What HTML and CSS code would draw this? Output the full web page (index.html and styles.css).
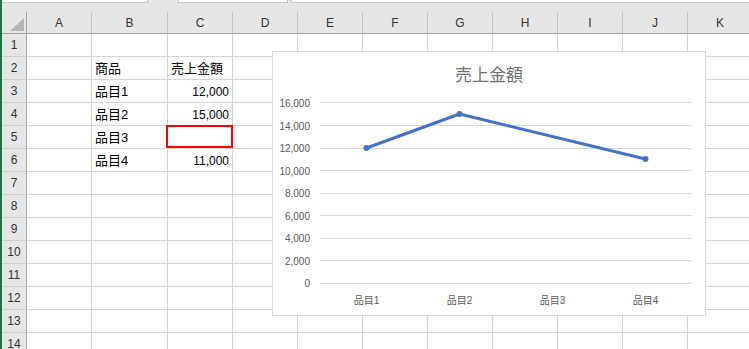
FILE: index.html
```html
<!DOCTYPE html>
<html lang="ja">

<head>
    <meta charset="UTF-8">
    <meta name="viewport" content="width=device-width, initial-scale=1.0">
    <title>売上金額</title>
    <link rel="stylesheet" href="styles.css">
</head>

<body>
    <div class="window">
        <div class="formula-bar">
            <div class="name-box"></div>
            <div class="fx-gap"></div>
            <div class="mid-box"></div>
            <div class="formula-box"></div>
        </div>

        <div class="sheet">
            <table class="grid">
                <colgroup>
                    <col class="col-rh">
                    <col class="col-w">
                    <col class="col-b">
                    <col class="col-w">
                    <col class="col-w">
                    <col class="col-w">
                    <col class="col-w">
                    <col class="col-w">
                    <col class="col-w">
                    <col class="col-w">
                    <col class="col-w">
                    <col class="col-w">
                </colgroup>
                <tr class="col-head">
                    <th class="corner"></th>
                    <th>A</th><th>B</th><th>C</th><th>D</th><th>E</th><th>F</th>
                    <th>G</th><th>H</th><th>I</th><th>J</th><th>K</th>
                </tr>
                <tr><th>1</th><td></td><td></td><td></td><td></td><td></td><td></td><td></td><td></td><td></td><td></td><td></td></tr>
                <tr><th>2</th><td></td><td>商品</td><td>売上金額</td><td></td><td></td><td></td><td></td><td></td><td></td><td></td><td></td></tr>
                <tr><th>3</th><td></td><td>品目1</td><td class="num">12,000</td><td></td><td></td><td></td><td></td><td></td><td></td><td></td><td></td></tr>
                <tr><th>4</th><td></td><td>品目2</td><td class="num">15,000</td><td></td><td></td><td></td><td></td><td></td><td></td><td></td><td></td></tr>
                <tr><th>5</th><td></td><td>品目3</td><td class="num sel"></td><td></td><td></td><td></td><td></td><td></td><td></td><td></td><td></td></tr>
                <tr><th>6</th><td></td><td>品目4</td><td class="num">11,000</td><td></td><td></td><td></td><td></td><td></td><td></td><td></td><td></td></tr>
                <tr><th>7</th><td></td><td></td><td></td><td></td><td></td><td></td><td></td><td></td><td></td><td></td><td></td></tr>
                <tr><th>8</th><td></td><td></td><td></td><td></td><td></td><td></td><td></td><td></td><td></td><td></td><td></td></tr>
                <tr><th>9</th><td></td><td></td><td></td><td></td><td></td><td></td><td></td><td></td><td></td><td></td><td></td></tr>
                <tr><th>10</th><td></td><td></td><td></td><td></td><td></td><td></td><td></td><td></td><td></td><td></td><td></td></tr>
                <tr><th>11</th><td></td><td></td><td></td><td></td><td></td><td></td><td></td><td></td><td></td><td></td><td></td></tr>
                <tr><th>12</th><td></td><td></td><td></td><td></td><td></td><td></td><td></td><td></td><td></td><td></td><td></td></tr>
                <tr><th>13</th><td></td><td></td><td></td><td></td><td></td><td></td><td></td><td></td><td></td><td></td><td></td></tr>
                <tr><th>14</th><td></td><td></td><td></td><td></td><td></td><td></td><td></td><td></td><td></td><td></td><td></td></tr>
            </table>

            <!-- chart floats over the cells D2:J13 -->
            <div class="chart">
                <svg width="432" height="263" viewBox="0 0 432 263">
                    <text class="chart-title" x="216" y="21">売上金額</text>

                    <g class="gridlines">
                        <line x1="47" y1="50.5" x2="419" y2="50.5"></line>
                        <line x1="47" y1="73.5" x2="419" y2="73.5"></line>
                        <line x1="47" y1="96.5" x2="419" y2="96.5"></line>
                        <line x1="47" y1="118.5" x2="419" y2="118.5"></line>
                        <line x1="47" y1="141.5" x2="419" y2="141.5"></line>
                        <line x1="47" y1="163.5" x2="419" y2="163.5"></line>
                        <line x1="47" y1="186.5" x2="419" y2="186.5"></line>
                        <line x1="47" y1="208.5" x2="419" y2="208.5"></line>
                        <line x1="47" y1="231.5" x2="419" y2="231.5"></line>
                    </g>

                    <g class="y-labels">
                        <text x="37" y="51">16,000</text>
                        <text x="37" y="74">14,000</text>
                        <text x="37" y="96">12,000</text>
                        <text x="37" y="119">10,000</text>
                        <text x="37" y="141">8,000</text>
                        <text x="37" y="164">6,000</text>
                        <text x="37" y="186">4,000</text>
                        <text x="37" y="209">2,000</text>
                        <text x="37" y="231">0</text>
                    </g>

                    <g class="x-labels">
                        <text x="93.5" y="248">品目1</text>
                        <text x="186.5" y="248">品目2</text>
                        <text x="279.5" y="248">品目3</text>
                        <text x="372.5" y="248">品目4</text>
                    </g>

                    <polyline class="series" points="93.5,96 186.5,62 372.5,107"></polyline>
                    <g class="markers">
                        <circle cx="93.5" cy="96" r="3"></circle>
                        <circle cx="186.5" cy="62" r="3"></circle>
                        <circle cx="372.5" cy="107" r="3"></circle>
                    </g>
                </svg>
            </div>
        </div>
    </div>
</body>

</html>
```

FILE: styles.css
```css
body {
    margin: 0;
    background: #fff;
    overflow: hidden;
    font-family: "Liberation Sans", "Noto Sans CJK JP", sans-serif;
}

.window {
    width: 749px;
    height: 349px;
    overflow: hidden;
    border-left: 2px solid #217346;
    box-sizing: border-box;
    background: #fff;
}

/* formula bar strip */
.formula-bar {
    display: flex;
    height: 12px;
    background: #e6e6e6;
}

.name-box {
    width: 145px;
    height: 2px;
    background: #fff;
    border-right: 1px solid #c6c6c6;
    border-bottom: 1px solid #c6c6c6;
}

.fx-gap {
    width: 30px;
}

.mid-box {
    width: 108px;
    height: 2px;
    background: #fff;
    border: 1px solid #c6c6c6;
    border-top: 0;
}

.formula-box {
    flex: 1;
    height: 2px;
    margin-left: 3px;
    background: #fff;
    border-left: 1px solid #c6c6c6;
    border-bottom: 1px solid #c6c6c6;
}

/* sheet grid */
.sheet {
    position: relative;
}

.grid {
    border-collapse: separate;
    border-spacing: 0;
    table-layout: fixed;
    width: 751px;
}

.col-rh {
    width: 25px;
}

.col-w {
    width: 65px;
}

.col-b {
    width: 76px;
}

.grid tr {
    height: 23px;
}

.grid tr.col-head {
    height: 22px;
}

.grid th,
.grid td {
    padding: 0;
    box-sizing: border-box;
    border-right: 1px solid #d4d4d4;
    border-bottom: 1px solid #d4d4d4;
    white-space: nowrap;
    overflow: hidden;
}

.grid th {
    background: #e6e6e6;
    color: #333;
    font-weight: normal;
    font-size: 12px;
    text-align: center;
    vertical-align: middle;
    border-right-color: #a6a6a6;
    border-bottom-color: #cfcfcf;
}

.col-head th {
    border-right-color: #c4c4c4;
    border-bottom-color: #9f9f9f;
}

.col-head th.corner {
    position: relative;
    border-right-color: #a6a6a6;
}

.corner::after {
    content: "";
    position: absolute;
    right: 2px;
    bottom: 2px;
    width: 14px;
    height: 13px;
    background: #b7b7b7;
    clip-path: polygon(100% 0, 100% 100%, 0 100%);
}

.grid td {
    color: #000;
    font-size: 13px;
    line-height: 16px;
    vertical-align: bottom;
    padding: 0 2px 2px 3px;
}

.grid td.num {
    font-size: 12px;
    text-align: right;
    padding-right: 3px;
}

.grid td.sel {
    position: relative;
    overflow: visible;
}

.sel::after {
    content: "";
    position: absolute;
    left: -2px;
    top: -1px;
    width: 67px;
    height: 23px;
    border: 2px solid #f00;
    box-sizing: border-box;
}

/* chart */
.chart {
    position: absolute;
    left: 270px;
    top: 39px;
    width: 434px;
    height: 265px;
    box-sizing: border-box;
    border: 1px solid #d9d9d9;
    background: #fff;
}

.chart svg {
    display: block;
}

.chart-title {
    font-family: "Noto Sans CJK JP", sans-serif;
    font-size: 17px;
    fill: #707070;
    text-anchor: middle;
    dominant-baseline: central;
}

.gridlines line {
    stroke: #d9d9d9;
    stroke-width: 1;
    shape-rendering: crispEdges;
}

.y-labels text {
    font-size: 10px;
    fill: #595959;
    text-anchor: end;
    dominant-baseline: central;
}

.x-labels text {
    font-family: "Liberation Sans", "Noto Sans CJK JP", sans-serif;
    font-size: 10px;
    fill: #595959;
    text-anchor: middle;
    dominant-baseline: central;
}

.series {
    fill: none;
    stroke: #4472c4;
    stroke-width: 3;
    stroke-linejoin: round;
    stroke-linecap: round;
}

.markers circle {
    fill: #4472c4;
}
```
